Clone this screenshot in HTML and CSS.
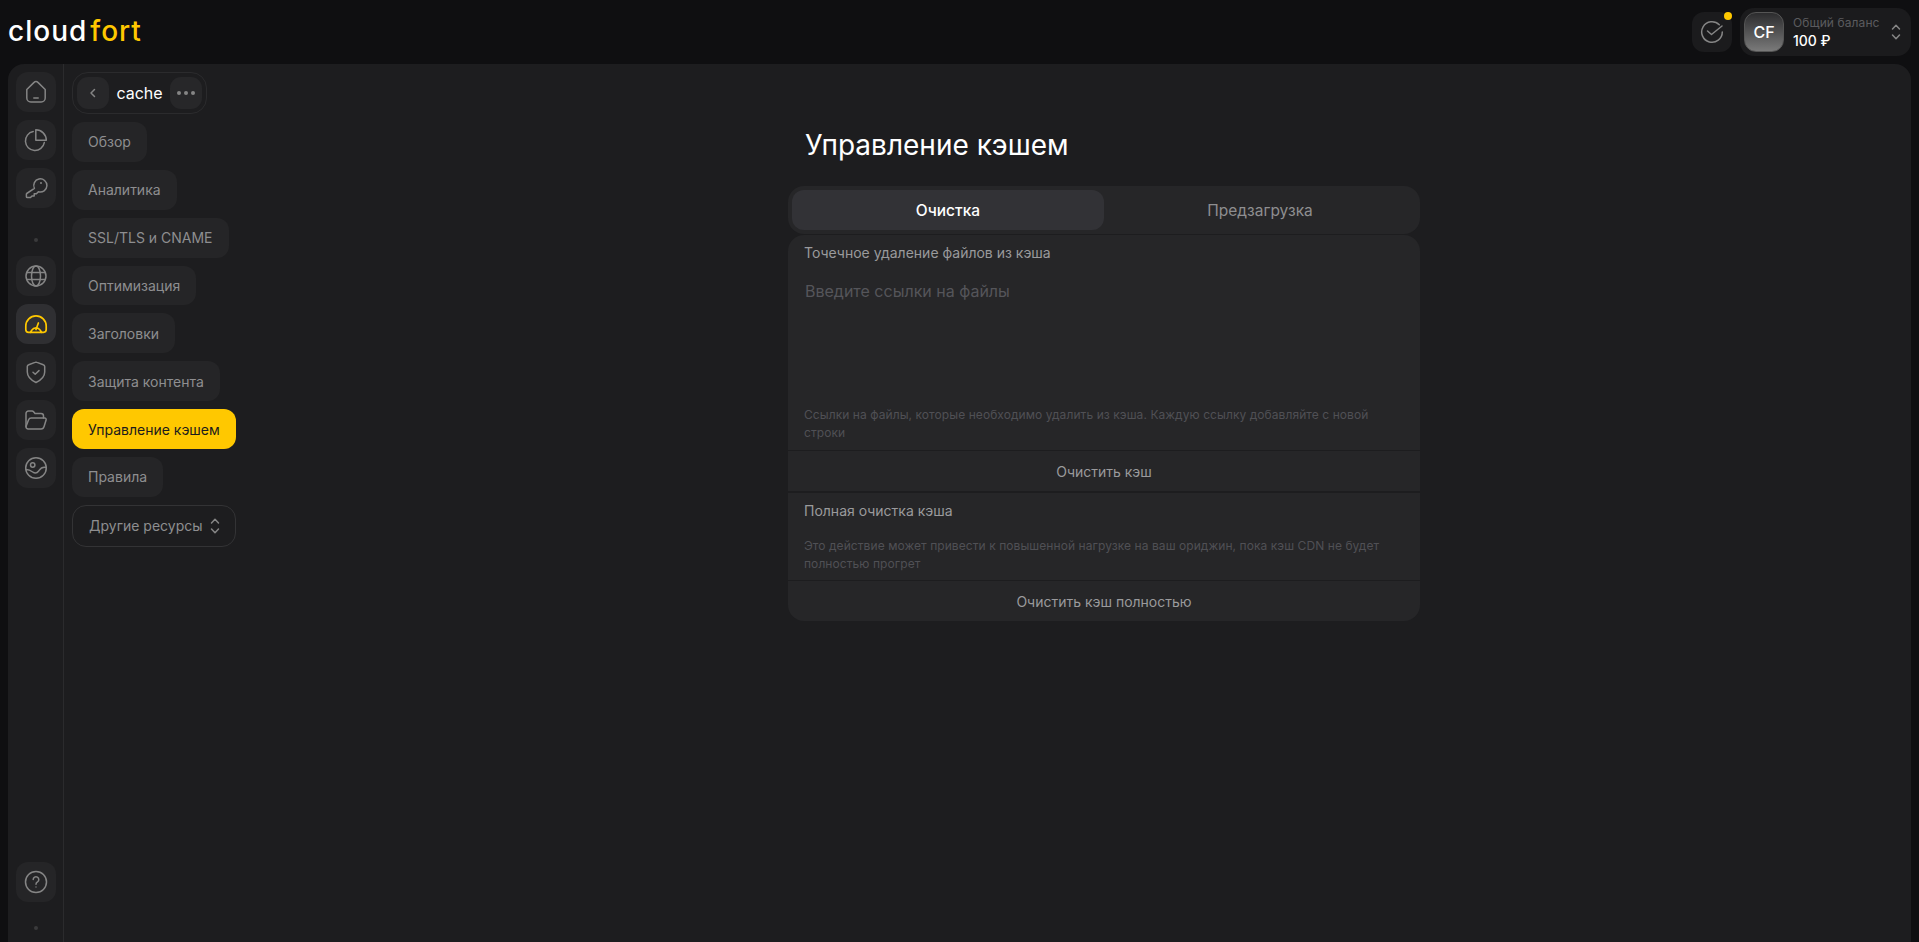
FILE: index.html
```html
<!DOCTYPE html>
<html lang="ru">
<head>
<meta charset="utf-8">
<title>Управление кэшем</title>
<link rel="stylesheet" href="styles.css">
</head>
<body>
<div class="app">
  <header class="topbar">
    <div class="logo">cloud<span class="logo-accent">fort</span></div>
    <div class="top-actions">
      <button class="notify">
        <svg class="ico" viewBox="0 0 24 24"><path d="M19.300 4.700A10.300 10.300 0 1 0 22.300 12"/><path d="M7.500 11l4 3.500L22 6"/></svg>
        <span class="notify-dot"></span>
      </button>
      <div class="balance">
        <div class="avatar">CF</div>
        <div class="balance-text">
          <div class="balance-label">Общий баланс</div>
          <div class="balance-value">100 ₽</div>
        </div>
        <svg class="updown" viewBox="0 0 12 20"><path d="M2.500 7 6 3.200 9.500 7"/><path d="M2.500 13 6 16.800 9.500 13"/></svg>
      </div>
    </div>
  </header>
  <div class="panel">
    <aside class="rail">
      <button class="rail-btn"><svg class="ico" viewBox="0 0 24 24"><path d="M2.800 9.500 9.800 2.600a3.200 3.200 0 0 1 4.400 0l7 6.900V18a4 4 0 0 1-4 4H6.800a4 4 0 0 1-4-4z"/><path d="M9.800 18h4.400"/></svg></button>
      <button class="rail-btn"><svg class="ico" viewBox="0 0 24 24"><path d="M9.200 3.600A9.500 9.500 0 1 0 20.300 14.600"/><path d="M11.800 1.800v10.500h10.500A10.500 10.500 0 0 0 11.800 1.800z"/></svg></button>
      <button class="rail-btn"><svg class="ico" viewBox="0 0 24 24"><path d="M10.400 12.400a6.600 6.600 0 1 1 4 3.400l-2 2h-2.200V20H8l-1.500 1.500H3.200a.8.800 0 0 1-.8-.8v-2.500a1 1 0 0 1 .3-.7z"/><circle cx="17" cy="7" r="1" class="fill"/></svg></button>
      <span class="rail-dot"></span>
      <button class="rail-btn"><svg class="ico" viewBox="0 0 24 24"><circle cx="12" cy="12" r="10"/><ellipse cx="12" cy="12" rx="4.500" ry="10"/><path d="M2.800 8.500h18.400M2.800 15.500h18.400"/></svg></button>
      <button class="rail-btn active"><svg class="ico" viewBox="0 0 24 24"><path d="M6.500 20.300H4.500a2.800 2.800 0 0 1-2.700-2.800V14a10.200 10.200 0 0 1 20.400 0v3.500a2.800 2.800 0 0 1-2.700 2.800h-2"/><path d="M6.500 20.300l1.300-2.200a5 5 0 0 1 8.400 0l1.300 2.200z"/><path d="M12 17.500l2.400-6.500"/></svg></button>
      <button class="rail-btn"><svg class="ico" viewBox="0 0 24 24"><path d="M11 2.400a2.500 2.500 0 0 1 2 0l6.300 2.300a2 2 0 0 1 1.400 1.900V12c0 4.800-3.500 8-8.700 10.500C6.800 20 3.300 16.800 3.300 12V6.600a2 2 0 0 1 1.400-1.900z"/><path d="M9 12.200l2.200 2 3.800-3.600"/></svg></button>
      <button class="rail-btn"><svg class="ico" viewBox="0 0 24 24"><path d="M2 18.500V5.500A2.500 2.500 0 0 1 4.500 3h3.600a2 2 0 0 1 1.500.7L11 5.500h6a2.500 2.500 0 0 1 2.500 2.500v2"/><path d="M2 18.500l2.600-6.700A2.800 2.800 0 0 1 7.200 10h13.500a1.500 1.500 0 0 1 1.400 2L20 18.700a3 3 0 0 1-2.900 2.300H4.200A2.200 2.200 0 0 1 2 18.500z"/></svg></button>
      <button class="rail-btn"><svg class="ico" viewBox="0 0 24 24"><circle cx="12" cy="12" r="10.300"/><circle cx="8.700" cy="9" r="2.200"/><path d="M2.200 13.500c2.500 0 4.500 1 6.500 2.500 2.500 1.800 4.500 1 6-1s2.800-4.500 7-3.500"/></svg></button>
      <button class="rail-btn rail-help"><svg class="ico" viewBox="0 0 24 24"><circle cx="12" cy="12" r="10.500"/><path d="M9.200 9.500a2.800 2.800 0 1 1 4.300 2.400c-1 .6-1.500 1.200-1.500 2.400"/><circle cx="12" cy="17" r=".7" class="fill"/></svg></button>
      <span class="rail-dot rail-dot-end"></span>
    </aside>
    <nav class="sidenav">
      <div class="resource">
        <button class="round-btn"><svg class="mini" viewBox="0 0 12 12"><path d="M7.500 2.500 4 6l3.500 3.500"/></svg></button>
        <span class="resource-name">cache</span>
        <button class="round-btn"><span class="dots"><i></i><i></i><i></i></span></button>
      </div>
      <a class="nav-item">Обзор</a>
      <a class="nav-item">Аналитика</a>
      <a class="nav-item">SSL/TLS и CNAME</a>
      <a class="nav-item">Оптимизация</a>
      <a class="nav-item">Заголовки</a>
      <a class="nav-item">Защита контента</a>
      <a class="nav-item current">Управление кэшем</a>
      <a class="nav-item">Правила</a>
      <button class="other">Другие ресурсы
        <svg class="updown" viewBox="0 0 12 20"><path d="M2.500 7 6 3.200 9.500 7"/><path d="M2.500 13 6 16.800 9.500 13"/></svg>
      </button>
    </nav>
    <main class="main">
      <div class="content">
        <h1 class="title">Управление кэшем</h1>
        <div class="tabs">
          <button class="tab tab-on">Очистка</button>
          <button class="tab">Предзагрузка</button>
        </div>
        <div class="card">
          <section class="block">
            <div class="label">Точечное удаление файлов из кэша</div>
            <div class="field">Введите ссылки на файлы</div>
            <p class="hint">Ссылки на файлы, которые необходимо удалить из кэша. Каждую ссылку добавляйте с новой строки</p>
          </section>
          <button class="action">Очистить кэш</button>
          <section class="block block-second">
            <div class="label">Полная очистка кэша</div>
            <p class="hint hint-second">Это действие может привести к повышенной нагрузке на ваш ориджин, пока кэш CDN не будет полностью прогрет</p>
          </section>
          <button class="action">Очистить кэш полностью</button>
        </div>
      </div>
    </main>
  </div>
</div>
</body>
</html>
```
FILE: styles.css
```css
* { box-sizing: border-box; }
html, body { margin: 0; height: 100%; overflow: hidden; }
body { background: #0f0f11; color: #fff; font-family: Inter, "Liberation Sans", sans-serif; font-size: 14px; }
button { font: inherit; border: 0; padding: 0; color: inherit; background: none; }
.app { height: 100vh; display: flex; flex-direction: column; }

.topbar { height: 64px; flex: none; display: flex; align-items: center; justify-content: space-between; padding: 0 8px; }
.logo { font-family: Inter, sans-serif; font-weight: 500; font-size: 28px; line-height: 32px; color: #fff; margin-top: -3px; letter-spacing: 1px; }
.logo-accent { color: #ffc800; margin-left: 3px; }
.top-actions { display: flex; gap: 8px; align-items: center; }
.notify { position: relative; width: 40px; height: 40px; border-radius: 12px; background: #1b1b1d; display: flex; align-items: center; justify-content: center; }
.notify-dot { position: absolute; top: 0; right: 0; width: 8px; height: 8px; border-radius: 50%; background: #ffc800; }
.balance { width: 171px; height: 48px; border-radius: 14px; background: #1b1b1d; display: flex; align-items: center; padding: 0 9px 0 4px; }
.avatar { width: 40px; height: 40px; border-radius: 12px; border: 1px solid #555; background: linear-gradient(#2c2c2e, #7a7a7a); display: flex; align-items: center; justify-content: center; font-size: 16px; font-weight: 500; }
.balance-text { margin-left: 9px; flex: 1; }
.balance-label { font-size: 12px; line-height: 18px; color: #5b5b5f; letter-spacing: .1px; }
.balance-value { font-size: 14px; line-height: 18px; font-weight: 500; color: #fff; }

.ico { width: 24px; height: 24px; fill: none; stroke: #858585; stroke-width: 1.5; stroke-linecap: round; stroke-linejoin: round; }
.ico .fill { fill: #858585; stroke: none; }
.updown { width: 12px; height: 20px; flex: none; fill: none; stroke: #858585; stroke-width: 1.5; stroke-linecap: round; stroke-linejoin: round; }
.mini { width: 12px; height: 12px; fill: none; stroke: #858585; stroke-width: 1.5; stroke-linecap: round; stroke-linejoin: round; }

.panel { flex: 1; min-height: 0; margin: 0 8px; background: #1d1d1f; border-radius: 16px 16px 0 0; display: flex; }
.rail { width: 56px; flex: none; border-right: 1px solid #2b2b2d; padding: 8px 7px 0 8px; display: flex; flex-direction: column; gap: 8px; }
.rail-btn { width: 40px; height: 40px; flex: none; border-radius: 12px; background: #252527; display: flex; align-items: center; justify-content: center; }
.rail-btn.active { background: #2f2f32; }
.rail-btn.active .ico { stroke: #ffc800; stroke-width: 1.7; }
.rail-dot { width: 4px; height: 4px; border-radius: 50%; background: #3a3a3c; align-self: center; margin: 22px 0 6px; }
.rail-help { margin-top: auto; }
.rail-dot-end { margin: 16px 0 12px; }

.sidenav { width: 233px; flex: none; padding: 8px 0 0 8px; display: flex; flex-direction: column; gap: 8px; align-items: flex-start; }
.resource { height: 42px; width: 135px; border: 1px solid #2b2b2d; border-radius: 16px; display: flex; align-items: center; padding: 0 4px; }
.round-btn { width: 32px; height: 32px; flex: none; border-radius: 11px; background: #272729; display: flex; align-items: center; justify-content: center; }
.resource-name { flex: 1; text-align: center; font-size: 16px; font-weight: 400; color: #fff; }
.dots { display: flex; gap: 3px; }
.dots i { width: 4px; height: 4px; border-radius: 50%; background: #858585; }
.nav-item { height: 39.86px; display: flex; align-items: center; padding: 0 16px; border-radius: 12px; background: #252527; color: #8e8e90; font-size: 14px; }
.nav-item.current { background: #ffc800; color: #1b1b1d; }
.other { height: 42px; width: 164px; border: 1px solid #333335; border-radius: 14px; color: #8e8e90; display: flex; align-items: center; justify-content: space-between; padding: 0 14px 0 16px; font-size: 14px; }

.main { flex: 1; min-width: 0; display: flex; justify-content: center; padding-top: 63px; }
.content { width: 632px; }
.title { margin: 0 0 23px 17px; font-size: 28px; line-height: 36px; font-weight: 400; color: #fff; }
.tabs { height: 48px; background: #262628; border-radius: 16px; padding: 4px; display: flex; margin-bottom: 1px; }
.tab { flex: 1; border-radius: 12px; color: #8e8e90; font-size: 15.5px; }
.tab-on { background: #323236; color: #fff; font-weight: 450; }
.card { background: #262628; border-radius: 16px; overflow: hidden; }
.block { padding: 8px 16px; }
.block-second { border-top: 2px solid #1d1d1f; padding-bottom: 7px; }
.label { font-size: 14px; line-height: 20px; color: #9a9a9c; }
.field { height: 143px; padding: 18px 0 0 1px; font-size: 16px; line-height: 20px; color: #55555a; }
.hint { margin: 0; font-size: 12px; line-height: 18px; color: #505055; letter-spacing: .07px; }
.hint-second { margin-top: 16px; }
.action { display: block; width: 100%; height: 41px; border-top: 1px solid #1d1d1f; color: #9a9a9c; font-size: 14px; text-align: center; }
```
